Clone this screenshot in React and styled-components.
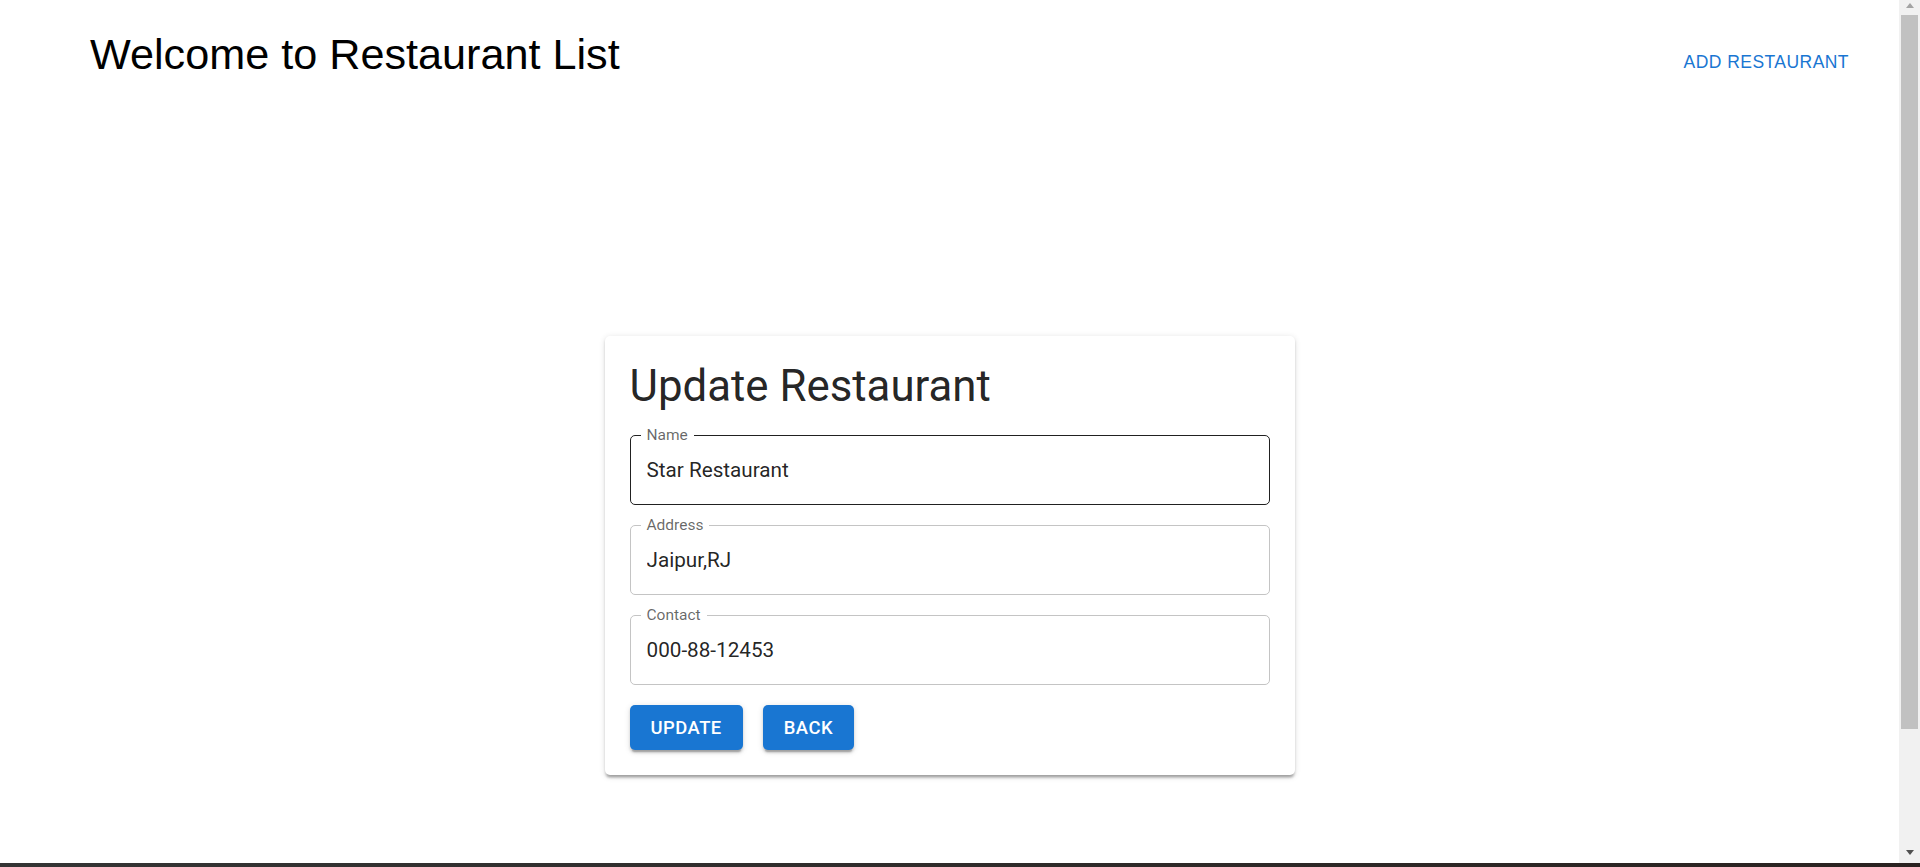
import React from "react"
import styled, { createGlobalStyle } from "styled-components"

const GlobalStyle = createGlobalStyle`
  html, body {
    margin: 0;
    padding: 0;
    height: 100%;
    overflow: hidden;
    background: #fff;
  }
  #root {
    height: 100%;
  }
`

const Shell = styled.div`
  height: 100vh;
  display: flex;
  flex-direction: column;
`

const Viewport = styled.div`
  flex: 1;
  min-height: 0;
  display: flex;
`

const Main = styled.main`
  flex: 1;
  min-width: 0;
  background: #fff;
  display: flex;
  flex-direction: column;
`

const Header = styled.header`
  display: flex;
  justify-content: space-between;
  align-items: flex-start;
  padding: 28px 40px 0 90px;
`

const Title = styled.h1`
  margin: 0;
  font-family: "Liberation Sans", Arial, sans-serif;
  font-size: 43.2px;
  font-weight: 400;
  line-height: 52.5px;
  color: #000;
`

const TextButton = styled.button`
  margin-top: 11px;
  padding: 7.5px 10px;
  border: none;
  background: transparent;
  font-family: "Liberation Sans", Arial, sans-serif;
  font-size: 17.5px;
  line-height: 30.6px;
  letter-spacing: 0.45px;
  text-transform: uppercase;
  color: #1976d2;
  cursor: pointer;
`

const Stage = styled.div`
  display: flex;
  justify-content: center;
  padding-top: 251px;
`

const Card = styled.div`
  width: 690px;
  box-sizing: border-box;
  padding: 23px 25px 25px;
  background: #fff;
  border-radius: 5px;
  box-shadow: 0 3.75px 2.5px -2.5px rgba(0, 0, 0, 0.2),
    0 2.5px 2.5px 0 rgba(0, 0, 0, 0.14), 0 1.25px 6.25px 0 rgba(0, 0, 0, 0.12);
  font-family: Roboto, "Liberation Sans", sans-serif;
`

const CardTitle = styled.h2`
  margin: 0 0 22px;
  font-size: 43.8px;
  font-weight: 400;
  line-height: 54px;
  color: rgba(0, 0, 0, 0.87);
`

const Form = styled.form`
  display: flex;
  flex-direction: column;
  gap: 20px;
`

const Field = styled.div`
  position: relative;
  height: 70px;
  box-sizing: border-box;
  display: flex;
  align-items: center;
  padding: 0 17px 0 16px;
  border: 1px solid ${(p) => (p.$active ? "rgba(0, 0, 0, 0.87)" : "#c4c4c4")};
  border-radius: 5px;
`

const Label = styled.label`
  position: absolute;
  top: -9px;
  left: 10px;
  padding: 0 6px;
  background: #fff;
  font-size: 15.5px;
  line-height: 17px;
  color: rgba(0, 0, 0, 0.6);
`

const Input = styled.input`
  width: 100%;
  padding: 0;
  border: none;
  outline: none;
  background: transparent;
  font-family: Roboto, "Liberation Sans", sans-serif;
  font-size: 20.7px;
  color: rgba(0, 0, 0, 0.87);
`

const Actions = styled.div`
  display: flex;
  gap: 20px;
`

const Button = styled.button`
  height: 45.5px;
  padding: 0 21px;
  border: none;
  border-radius: 5px;
  background: #1976d2;
  color: #fff;
  font-family: Roboto, "Liberation Sans", sans-serif;
  font-size: 18.4px;
  font-weight: 500;
  letter-spacing: 0.5px;
  text-transform: uppercase;
  box-shadow: 0 3.75px 1.25px -2.5px rgba(0, 0, 0, 0.2),
    0 2.5px 2.5px 0 rgba(0, 0, 0, 0.14), 0 1.25px 6.25px 0 rgba(0, 0, 0, 0.12);
  cursor: pointer;
`

const Scrollbar = styled.div`
  width: 21px;
  background: #f1f1f1;
  display: flex;
  flex-direction: column;
`

const ArrowButton = styled.div`
  height: ${(p) => (p.$up ? "15px" : "21px")};
  display: flex;
  justify-content: center;
  align-items: ${(p) => (p.$up ? "flex-start" : "center")};
  padding-top: ${(p) => (p.$up ? "3px" : "0")};
  box-sizing: border-box;
`

const Arrow = styled.span`
  width: 0;
  height: 0;
  border-left: 4.5px solid transparent;
  border-right: 4.5px solid transparent;
  ${(p) =>
    p.$up
      ? "border-bottom: 5px solid #a3a3a3;"
      : "border-top: 5px solid #505050;"}
`

const Track = styled.div`
  flex: 1;
  padding: 0 2px;
`

const Thumb = styled.div`
  height: 714px;
  background: #c1c1c1;
`

const BottomEdge = styled.div`
  height: 4px;
  background: linear-gradient(to right, #343434, #2a2220);
`

const fields = [
  { label: "Name", value: "Star Restaurant", active: true },
  { label: "Address", value: "Jaipur,RJ" },
  { label: "Contact", value: "000-88-12453" },
]

export default function App() {
  return (
    <Shell>
      <GlobalStyle />
      <Viewport>
        <Main>
          <Header>
            <Title>Welcome to Restaurant List</Title>
            <TextButton type="button">Add Restaurant</TextButton>
          </Header>
          <Stage>
            <Card>
              <CardTitle>Update Restaurant</CardTitle>
              <Form onSubmit={(e) => e.preventDefault()}>
                {fields.map((f) => (
                  <Field key={f.label} $active={f.active}>
                    <Label>{f.label}</Label>
                    <Input defaultValue={f.value} />
                  </Field>
                ))}
                <Actions>
                  <Button type="submit">Update</Button>
                  <Button type="button">Back</Button>
                </Actions>
              </Form>
            </Card>
          </Stage>
        </Main>
        <Scrollbar>
          <ArrowButton $up>
            <Arrow $up />
          </ArrowButton>
          <Track>
            <Thumb />
          </Track>
          <ArrowButton>
            <Arrow />
          </ArrowButton>
        </Scrollbar>
      </Viewport>
      <BottomEdge />
    </Shell>
  )
}
